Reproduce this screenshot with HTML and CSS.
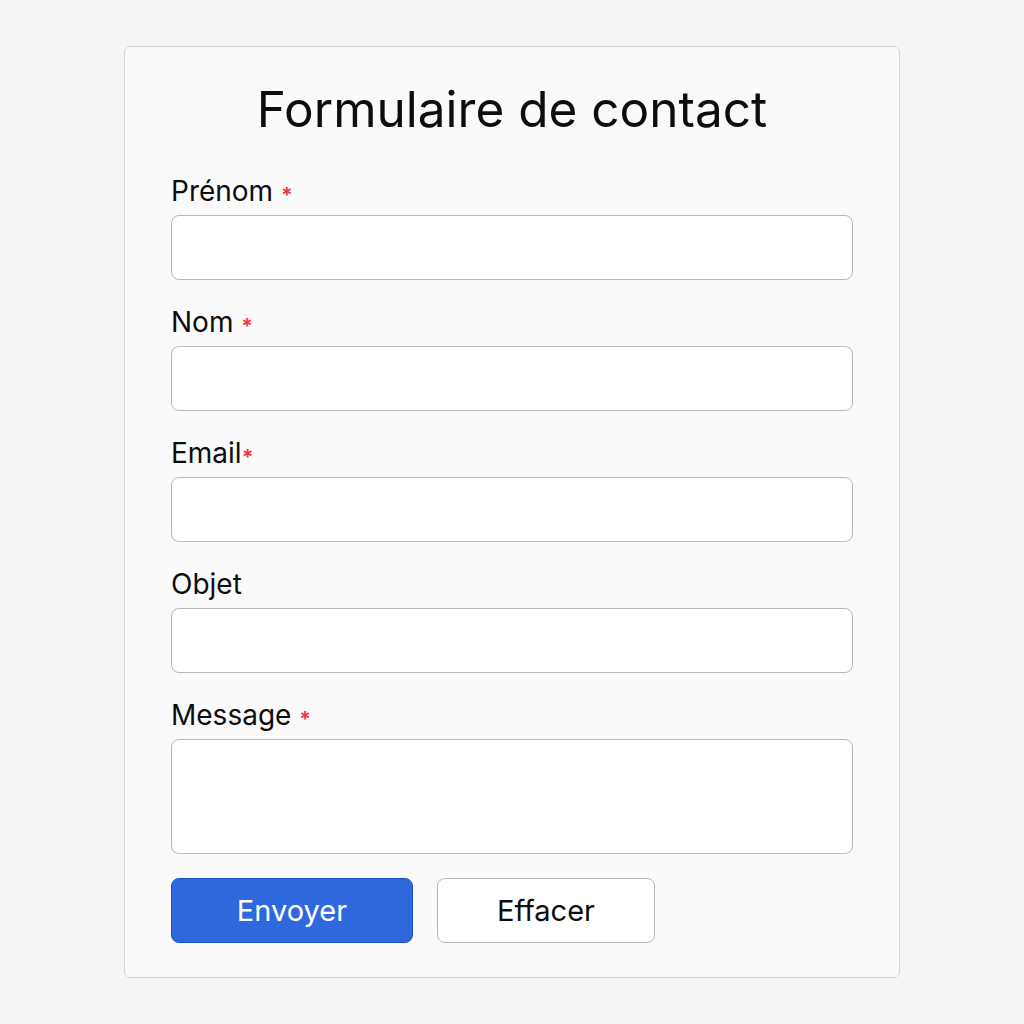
FILE: index.html
```html
<!DOCTYPE html>
<html lang="fr">
<head>
<meta charset="utf-8">
<title>Formulaire de contact</title>
<link rel="stylesheet" href="styles.css">
</head>
<body>
<main class="page">
  <form class="card">
    <h1 class="title">Formulaire de contact</h1>
    <div class="field">
      <label class="label">Prénom <span class="req">*</span></label>
      <input class="input" type="text">
    </div>
    <div class="field">
      <label class="label">Nom <span class="req">*</span></label>
      <input class="input" type="text">
    </div>
    <div class="field">
      <label class="label">Email<span class="req">*</span></label>
      <input class="input" type="email">
    </div>
    <div class="field">
      <label class="label">Objet</label>
      <input class="input" type="text">
    </div>
    <div class="field">
      <label class="label">Message <span class="req">*</span></label>
      <textarea class="input textarea"></textarea>
    </div>
    <div class="actions">
      <button type="button" class="btn btn-primary">Envoyer</button>
      <button type="button" class="btn btn-secondary">Effacer</button>
    </div>
  </form>
</main>
</body>
</html>
```
FILE: styles.css
```css
* { box-sizing: border-box; }
html, body {
  margin: 0;
  padding: 0;
  background: #f5f5f5;
  font-family: Inter, "Noto Sans", sans-serif;
  color: #0d0d0d;
}
.page {
  display: flex;
  justify-content: center;
  padding-top: 46px;
  height: 1024px;
}
.card {
  width: 776px;
  height: 932px;
  background: #fafafa;
  border: 1.5px solid #d4d4d4;
  border-radius: 7px;
  padding: 0 46px;
  display: flex;
  flex-direction: column;
}
.title {
  margin: 33px 0 0;
  font-size: 49.5px;
  line-height: 58px;
  font-weight: 400;
  text-align: center;
  letter-spacing: 0;
}
.field {
  display: flex;
  flex-direction: column;
  margin-top: 25px;
}
.field:first-of-type { margin-top: 36px; }
.label {
  font-size: 28px;
  line-height: 34px;
  height: 34px;
  margin-bottom: 7px;
}
.req {
  color: #ee3a44;
  font-size: 21px;
  font-weight: 700;
  line-height: 0;
  position: relative;
  top: 2px;
}
.input {
  height: 65px;
  border: 1.5px solid #b8b8b8;
  border-radius: 8px;
  background: #fff;
  font: inherit;
}
.textarea {
  height: 115px;
  resize: none;
}
.actions {
  display: flex;
  gap: 24px;
  margin-top: 23.5px;
}
.btn {
  height: 65px;
  border-radius: 8px;
  font-family: Inter, "Noto Sans", sans-serif;
  font-size: 29px;
  cursor: pointer;
}
.btn-primary {
  width: 242px;
  background: #2f68dc;
  border: 1px solid #1d55c6;
  color: #fff;
}
.btn-secondary {
  width: 218px;
  background: #fff;
  border: 1.5px solid #b8b8b8;
  color: #0d0d0d;
}
```
